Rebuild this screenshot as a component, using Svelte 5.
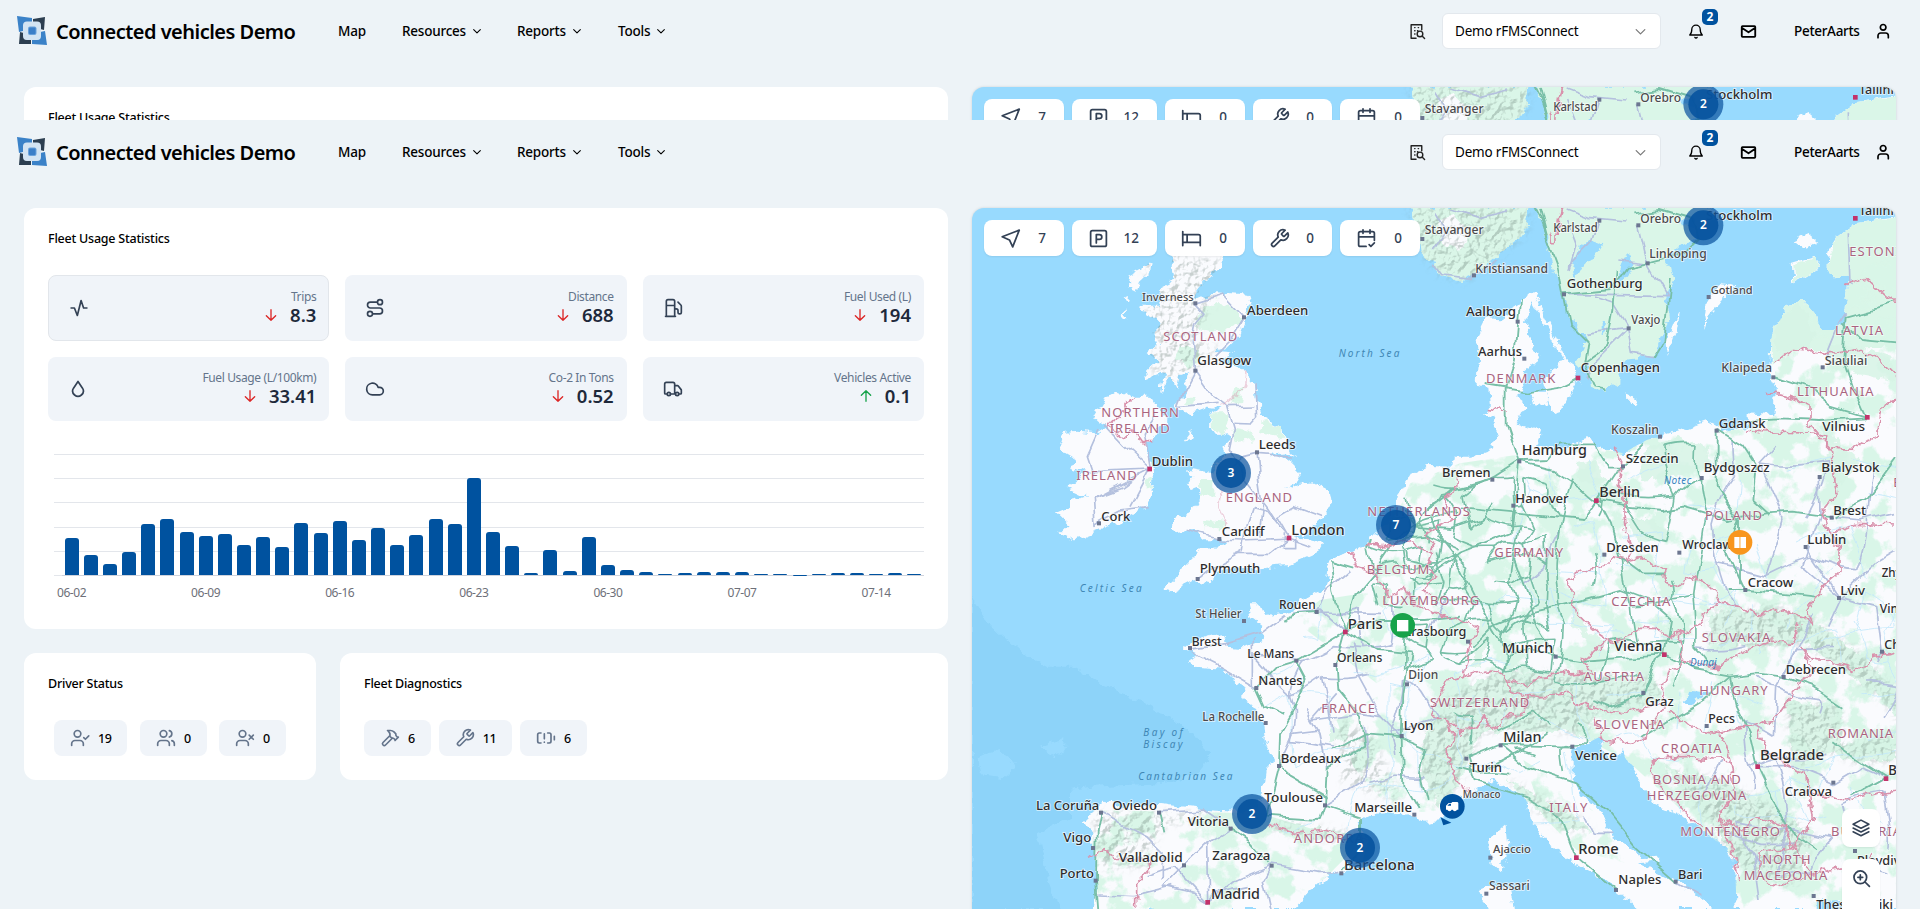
<script>
  const icons = {
    trips: 'M2.500 12h4l3.500 9 4.500-18 3 9h4',
    route: 'M3 19a3 3 0 1 0 6 0a3 3 0 1 0-6 0M15 5a3 3 0 1 0 6 0a3 3 0 1 0-6 0M9 19h8.500a3.500 3.500 0 0 0 0-7h-11a3.500 3.500 0 0 1 0-7H15',
    fuel: 'M3 22h12M4 9h10M14 22V4a2 2 0 0 0-2-2H6a2 2 0 0 0-2 2v18M14 13h2a2 2 0 0 1 2 2v2a2 2 0 0 0 4 0V9.800a2 2 0 0 0-.590-1.400L18 5',
    drop: 'M6.600 11 12 3 17.400 11c1.700 2.700 1 6.200-1.300 8.200a6.300 6.300 0 0 1-8.200 0C5.600 17.200 4.900 13.700 6.600 11',
    cloud: 'M17.500 19H9a7 7 0 1 1 6.710-9h1.790a4.500 4.500 0 1 1 0 9Z',
    truck: 'M14 18V6a2 2 0 0 0-2-2H4a2 2 0 0 0-2 2v11a1 1 0 0 0 1 1h2M15 18H9M19 18h2a1 1 0 0 0 1-1v-3.650a1 1 0 0 0-.22-.624l-3.480-4.350A1 1 0 0 0 17.520 8H14M15 18a2 2 0 1 0 4 0a2 2 0 1 0-4 0M5 18a2 2 0 1 0 4 0a2 2 0 1 0-4 0',
    down: 'M12 4v16M5 13l7 7 7-7',
    up: 'M12 20V4M5 11l7-7 7 7',
    driverOn: 'M5 7a4 4 0 1 0 8 0a4 4 0 1 0-8 0M2 21v-2a4 4 0 0 1 4-4h6a4 4 0 0 1 4 4v2M16.500 11.500l2 2 4-4',
    drivers: 'M5 7a4 4 0 1 0 8 0a4 4 0 1 0-8 0M2 21v-2a4 4 0 0 1 4-4h6a4 4 0 0 1 4 4v2M16 3.130a4 4 0 0 1 0 7.750M22 21v-2a4 4 0 0 0-3-3.850',
    driverOff: 'M5 7a4 4 0 1 0 8 0a4 4 0 1 0-8 0M2 21v-2a4 4 0 0 1 4-4h6a4 4 0 0 1 4 4v2M17 8.500l5 5M22 8.500l-5 5',
    hammer: 'M15 12l-8.373 8.373a1 1 0 1 1-3-3L12 9M18 15l4-4M21.500 11.500l-1.914-1.914A2 2 0 0 1 19 8.172V7l-2.260-2.260a6 6 0 0 0-4.202-1.756L9 2.960l.92.82A6.180 6.180 0 0 1 12 8.400V10l2 2h1.172a2 2 0 0 1 1.414.586L18.500 14.500',
    wrench: 'M14.700 6.300a1 1 0 0 0 0 1.400l1.600 1.600a1 1 0 0 0 1.400 0l3.770-3.770a6 6 0 0 1-7.940 7.940l-6.910 6.910a2.120 2.120 0 0 1-3-3l6.910-6.910a6 6 0 0 1 7.940-7.940l-3.760 3.760z',
    battery: 'M10 17h.01M10 7v6M14 6h2a2 2 0 0 1 2 2v8a2 2 0 0 1-2 2h-2M22 14v-4M6 18H4a2 2 0 0 1-2-2V8a2 2 0 0 1 2-2h2',
    nav: 'M22 2.500 14.500 21.500 10.800 13.700 2.500 10z',
    parking: 'M5 3h14a2 2 0 0 1 2 2v14a2 2 0 0 1-2 2H5a2 2 0 0 1-2-2V5a2 2 0 0 1 2-2zM9.500 17V7.500h3.500a2.800 2.800 0 0 1 0 5.600H9.500',
    bed: 'M2 4v16M2 7.500h18a2 2 0 0 1 2 2V20M2 16.500h20M7 7.500v9',
    calendar: 'M11.500 21H5a2 2 0 0 1-2-2V6a2 2 0 0 1 2-2h14a2 2 0 0 1 2 2v8M16 2v4M8 2v4M3 10h18M15 19l2 2 4-4',
    layers: 'M12 2.500 2.500 7.500l9.500 4.800 9.500-4.800zM2.500 12l9.500 4.800 9.500-4.800M2.500 16.500 12 21.300l9.500-4.800',
    zoomIn: 'M2.500 10.500a8 8 0 1 0 16 0a8 8 0 1 0-16 0M7.500 10.500h6M10.500 7.500v6M22 22l-5.900-5.900',
    chevron: 'M4 8.500l8 8 8-8',
    bell: 'M10.300 21.500a2 2 0 0 0 3.400 0M2.500 18h19c-2.300-1.500-3.200-3.500-3.200-8.500a6.300 6.300 0 0 0-12.600 0c0 5-.9 7-3.200 8.500z',
    mail: 'M3.500 4.500h17a1 1 0 0 1 1 1v13a1 1 0 0 1-1 1h-17a1 1 0 0 1-1-1v-13a1 1 0 0 1 1-1zM3 7l9 6 9-6',
    user: 'M8 6.500a4.200 4.200 0 1 0 8.400 0a4.200 4.200 0 1 0-8.400 0M4.500 22v-3a4 4 0 0 1 4-4H16a4 4 0 0 1 4 4v3',
    building: 'M10 21.500H3v-19h15v7M8 6.500h.5M13 6.500h.5M8 11h.5M8 15.500h.5M12 11h.5M11.500 15.500a4 4 0 1 0 8 0a4 4 0 1 0-8 0M18.500 18.500l3.500 3.500',
  };

  const stats = [
    ['Trips', '8.3', 'trips', 'down'],
    ['Distance', '688', 'route', 'down'],
    ['Fuel Used (L)', '194', 'fuel', 'down'],
    ['Fuel Usage (L/100km)', '33.41', 'drop', 'down'],
    ['Co-2 In Tons', '0.52', 'cloud', 'down'],
    ['Vehicles Active', '0.1', 'truck', 'up'],
  ];
  const bars = [37, 20, 11, 23, 51, 56.500, 43.500, 39.500, 41, 30.500, 38, 28.500, 52, 42.500, 54, 35, 47.500, 30.500, 40, 56, 51.500, 97, 43.500, 29.500, 2.500, 25.500, 4, 38, 10, 5, 3.500, 0.700, 2, 3.500, 3, 3, 1.300, 1.300, 0.300, 1.300, 2.500, 2.500, 1.300, 2, 1];
  const days = ['06-02', '06-09', '06-16', '06-23', '06-30', '07-07', '07-14'];
  const filters = [['nav', 7, 80], ['parking', 12, 85], ['bed', 0, 80], ['wrench', 0, 79], ['calendar', 0, 80]];

  // Coastlines, three map units to the pixel
  const continent = '1860,560 1725,280 1680,295 1670,320 1620,355 1580,350 1550,410 1555,450 1550,555 1585,560 1590,620 1568,640 1600,650 1615,700 1585,750 1530,770 1485,770 1480,800 1400,798 1355,820 1325,870 1310,930 1290,960 1250,1000 1220,1030 1170,1060 1120,1075 1105,1100 1100,1150 1080,1170 1010,1210 1000,1235 920,1245 905,1210 865,1210 875,1250 910,1280 905,1320 850,1345 805,1340 785,1300 700,1320 670,1345 710,1365 680,1380 705,1400 770,1405 830,1440 850,1470 850,1500 890,1520 910,1580 915,1620 945,1680 915,1710 905,1780 890,1825 830,1835 730,1830 600,1815 540,1820 430,1805 365,1870 400,1900 395,1940 410,1980 415,2042 400,2130 1000,2130 1050,2070 1060,2050 1140,2020 1205,1980 1220,1925 1190,1870 1230,1845 1360,1840 1400,1865 1440,1860 1500,1800 1560,1760 1600,1735 1640,1760 1695,1785 1710,1860 1760,1925 1840,1985 1870,2005 1920,2030 1980,2080 2030,2130 2270,2130 2220,2090 2150,2045 2070,2005 2040,1990 2100,1985 2090,1970 2050,1975 2020,1950 1955,1910 1940,1870 1910,1820 1860,1780 1835,1730 1835,1660 1840,1640 1860,1640 1920,1610 1935,1620 1925,1640 1955,1680 1980,1650 2020,1710 2080,1810 2170,1850 2240,1900 2300,1950 2325,1990 2330,2130 2570,2130 2570,2105 2640,2100 2650,2130 2850,2130 2850,50 2790,55 2685,70 2630,110 2605,150 2600,200 2630,235 2670,220 2665,280 2655,370 2620,390 2580,390 2570,350 2530,300 2480,320 2435,410 2430,530 2445,560 2440,645 2360,640 2360,670 2420,675 2340,685 2280,700 2280,680 2240,660 2160,690 2060,720 1990,760 1940,750 1925,740 1880,720 1830,735 1780,750 1730,740 1750,700 1670,670 1680,640 1710,620 1670,590 1690,560 1695,510 1730,485 1740,460 1725,450 1705,400 1695,370 1720,310';
  const nordic = ['1350,20 1360,80 1380,120 1385,160 1410,185 1440,225 1510,240 1545,225 1595,185 1625,155 1685,110 1700,90 1705,20', '1725,20 1760,90 1765,150 1795,240 1810,290 1830,350 1875,410 1870,450 1850,485 1865,500 1885,500 1890,560 1940,570 1970,555 1975,525 1990,480 2080,470 2100,420 2125,370 2120,300 2140,240 2130,200 2115,180 2170,130 2210,110 2220,90 2250,60 2250,20'];
  const islands = ['640,130 785,140 785,200 750,230 720,265 705,305 740,290 770,280 865,287 872,310 850,355 840,400 800,440 760,455 820,460 780,480 850,510 885,550 890,600 910,655 960,680 975,715 1005,775 980,760 930,765 1000,790 1020,830 1010,850 975,870 1020,855 1060,850 1110,875 1115,905 1090,950 1060,975 1040,1000 1000,1010 1060,1020 1095,1030 1075,1055 985,1095 920,1100 905,1115 875,1100 800,1105 770,1120 745,1150 700,1140 660,1160 630,1175 607,1170 640,1140 665,1105 720,1050 790,1040 805,1025 775,1015 730,1015 700,990 650,1000 640,985 655,955 700,925 720,900 715,860 690,870 675,860 700,830 680,805 760,820 770,780 800,760 790,740 810,720 805,700 770,705 750,680 755,640 785,625 740,620 690,640 655,625 660,600 680,565 675,540 690,510 660,520 650,570 630,530 600,580 610,520 560,540 555,515 590,480 565,460 600,430 575,400 605,370 560,345 540,320 605,320 600,265 645,240 635,195', '495,572 520,590 575,590 600,630 620,660 590,690 575,725 555,730 565,760 575,810 580,850 565,920 510,940 480,965 420,990 370,1010 330,1018 295,1000 320,975 285,940 330,920 330,900 385,890 320,860 350,835 385,820 330,800 345,775 320,760 300,735 310,700 350,695 410,700 440,680 415,665 400,650 430,600 465,590', '575,180 570,220 540,245 530,275 508,265 520,240 510,225 545,205', '510,285 508,305 485,295', '495,320 502,355 490,355', '698,685 695,710 670,722', '1770,510 1820,480 1850,500 1855,540 1830,580 1810,630 1780,640 1765,600 1750,560', '1705,575 1755,575 1765,610 1730,620', '2160,328 2150,390 2130,440 2120,468 2117,430 2140,370', '2290,250 2320,255 2285,310 2255,340 2240,380 2235,350 2240,300', '2000,582 2030,600 2025,615 2002,602', '2495,190 2560,170 2585,200 2530,235 2500,250', '2500,125 2540,105 2570,130 2540,155', '1590,1920 1640,1875 1645,1940 1625,2020 1595,1990', '1555,2070 1610,2050 1655,2070 1665,2130 1580,2130'];
  const lakes = ['1860,140 1890,115 1930,130 1900,180 1870,200 1850,240 1840,200', '1990,170 2015,160 2010,210 1985,250 1970,240', '2180,1475 2240,1480 2200,1510 2175,1515', '1925,370 1938,360 1935,395 1925,400', '2150,60 2200,55 2210,80 2170,75'];
  const moors = ['715,340 770,300 840,340 840,370 780,400 710,380', '660,440 710,450 720,490 680,500 650,480', '755,640 800,640 810,690 780,705 755,680', '820,680 870,690 880,720 830,730', '905,660 960,680 970,715 900,700', '720,840 760,840 760,890 720,890', '820,560 850,560 840,610 815,605', '560,830 578,840 575,870 560,860', '730,960 800,970 780,985 730,985', '670,590 710,590 700,620 670,615'];
  const woods = ['1350,850 1500,790 1700,760 2280,690 2450,560 2430,380 2850,120 2850,2130 2300,2130 2230,1890 2000,1680 1840,1600 1400,1560 1340,1300 1240,1120', '1130,1560 1230,1500 1340,1450 1480,1600 1480,1830 1300,1840 1180,1700', '380,1830 900,1840 1200,1930 1000,2130 420,2130', '1690,1680 1800,1750 1920,1850 2000,1990 1850,1950 1750,1850', '1080,1200 1400,1150 1400,1350 1250,1450 1000,1260'];
  const mountains = ['1400,1590 1470,1490 1600,1420 1850,1420 2090,1440 2110,1500 1900,1540 1880,1600 1650,1590 1560,1600 1500,1740 1440,1820 1380,1720', '2250,1240 2450,1220 2550,1260 2700,1360 2780,1450 2700,1420 2540,1330 2380,1340 2240,1330', '2110,1700 2280,1740 2440,1820 2560,1900 2500,2060 2340,2000 2260,1880', '2480,1500 2640,1520 2650,1640 2500,1700', '2600,1650 2808,1600 2808,1680 2700,1690', '930,1870 1190,1900 1180,1930 940,1890', '2550,1270 2850,1500 2850,1600 2750,1480 2650,1410 2560,1350', '1640,1730 1700,1770 1850,1850 1900,1900 1800,1880 1690,1800'];
  // Closed forests between the lowland patches
  const forests = ['2060,745 2160,710 2240,740 2250,800 2150,830 2040,840', '1700,1070 1790,1080 1820,1200 1740,1230 1700,1160', '1840,1180 1880,1290 1940,1330 1900,1350 1830,1260', '1560,1250 1590,1270 1560,1400 1530,1400', '2600,430 2700,440 2790,470 2808,540 2700,520 2600,500', '2450,360 2520,310 2570,400 2540,450 2450,450', '2250,1290 2340,1260 2440,1290 2360,1320 2280,1330', '1850,790 1910,780 1940,850 1860,850', '1750,880 1790,860 1800,920 1760,920', '2600,700 2700,780 2640,860 2600,800', '2000,960 2080,960 2140,1010 2040,1030', '1240,1160 1290,1170 1280,1230 1240,1200', '1110,1580 1170,1570 1160,1620 1110,1630'];

  const borders = [
    '520,590 495,610 495,640 460,660 440,680 470,700 490,718 520,690 545,725 580,725',
    '1805,24 1795,80 1790,125 1775,125 1770,100', '1585,625 1640,635', '1965,740 1985,790 1975,860 1995,880 1995,940 2000,1000 2015,1050 2000,1080',
    '1490,830 1485,880 1455,890 1450,930 1480,960 1430,980 1400,1000 1420,1040 1420,1060', '1220,1030 1290,1040 1340,1020 1390,1050 1420,1060',
    '1170,1060 1190,1100 1240,1115 1280,1180 1310,1180 1330,1160 1350,1200 1370,1215', '1420,1060 1400,1110 1430,1130 1400,1150 1390,1170 1410,1190',
    '1370,1215 1420,1235 1500,1260 1550,1280 1530,1340 1510,1430 1590,1410 1650,1440', '1510,1430 1460,1440 1440,1490 1410,1540 1460,1560 1500,1600 1550,1580 1570,1550 1600,1590 1630,1550 1690,1550 1700,1490 1650,1470 1650,1440',
    '1460,1560 1480,1610 1460,1670 1490,1740 1525,1765', '1650,1440 1700,1455 1740,1430 1850,1420 1900,1420 1870,1380 1910,1350 1940,1320',
    '1700,1490 1760,1490 1830,1480 1850,1510 1920,1530 2000,1540 2060,1520 2120,1510 2110,1470 2130,1410 2160,1400 2165,1300',
    '1825,1145 1860,1120 1940,1090 1960,1070 2000,1080 2040,1070 2120,1115 2110,1140 2150,1160 2190,1130 2240,1150 2270,1180 2280,1210 2240,1230 2220,1270 2160,1300 2140,1310 2080,1285 2030,1285 2010,1310 1960,1330 1900,1290 1850,1240 1840,1190 1825,1145',
    '2165,1380 2280,1400 2290,1380 2370,1350 2440,1320 2500,1330 2520,1270', '2280,1210 2350,1220 2400,1250 2440,1225 2530,1250 2560,1275',
    '2560,1275 2540,1230 2580,1170 2640,1120 2640,1050 2610,1000 2590,930 2630,880 2610,740 2570,700 2400,695 2360,690',
    '2425,580 2480,590 2550,620 2550,680 2600,710 2600,740 2680,745 2750,700 2760,620 2808,600', '2440,490 2500,445 2600,460 2700,445 2760,480 2808,530', '2660,260 2720,235 2780,290 2808,300', '2610,1000 2690,970 2808,975',
    '2130,1530 2200,1590 2260,1600 2340,1580 2440,1565 2500,1480 2560,1400 2520,1340', '2520,1340 2560,1380 2600,1385 2700,1410 2740,1370 2808,1360',
    '2380,1570 2420,1650 2480,1700 2540,1720 2560,1780 2650,1800 2750,1780 2808,1770', '1900,1550 1930,1620 2020,1630 2060,1600 2120,1510', '2280,1600 2300,1640 2310,1680 2180,1670 2120,1670 2075,1690 2090,1740 2140,1800 2220,1880',
    '2310,1680 2320,1780 2270,1860 2350,1880 2400,1850 2470,1880 2500,1940 2400,1950 2400,2020 2440,2060 2540,2030 2600,2010 2700,1990 2740,1960', '2540,1720 2560,1860 2500,1940 2560,2030', '2270,1860 2300,1900 2320,1960 2340,2040',
    '930,1875 1000,1900 1100,1890 1160,1920 1210,1920', '390,1975 430,1955 460,1975 540,1975 575,2000 530,2050 530,2120',
  ];

  const motorways = [
    '1678,984 1660,1070 1700,1180 1730,1280 1787,1370', '1678,784 1665,900 1655,1000 1500,1060 1400,1130', '1678,784 1780,810 1860,860 1909,902 2000,920 2110,930 2170,920 2310,960 2420,940 2500,935 2610,950', '1678,784 1590,840 1480,870 1400,930', '1678,784 1640,670 1640,560 1665,480 1675,365 1680,300', '1909,902 1870,960 1500,925', '1909,902 1950,980 1973,1063 2050,1120 2120,1120', '1909,902 1970,810 1990,800 2060,730', '1787,1370 1850,1380 2000,1370 2113,1364', '1787,1370 1700,1350 1640,1370 1620,1420', '2113,1364 2130,1260 2060,1200 1980,1170 1870,1200', '2113,1364 2200,1410 2310,1430 2390,1420 2470,1430', '2470,1430 2560,1460 2650,1520', '2310,1430 2330,1520 2370,1600 2393,1700', '2310,1430 2230,1500 2130,1560 2040,1620', '2393,1700 2440,1800 2500,1900 2570,1950', '2050,1480 2090,1380 2113,1364', '2300,1170 2356,1170 2480,1180 2560,1190', '2356,1170 2300,1050 2340,960', '2270,690 2270,860 2340,960 2340,1150', '2270,690 2350,740 2390,800 2380,900 2430,945', '1812,283 1950,270 2000,200 2075,185 2170,160 2220,110', '1812,283 1830,370 1880,420 1870,490 1900,560 1940,565', '1812,283 1795,200 1765,120 1740,24', '1870,490 1940,440 1960,330 1970,210', '1580,555 1700,575 1800,560 1854,534', '1156,1296 1120,1180 1110,1080 1180,1100', '1156,1296 1010,1382 1040,1440 990,1550 960,1600 957,1695', '1156,1296 1130,1390 1135,1470 1200,1550 1210,1640 1100,1700 1095,1815', '1156,1296 1250,1350 1350,1360 1330,1480 1325,1608', '1156,1296 1190,1180 1240,1120 1300,1030', '1156,1296 1260,1260 1400,1260 1500,1250', '1070,1236 1010,1240 970,1260', '889,1463 915,1520 970,1545', '889,1463 950,1400 1010,1382', '1325,1608 1330,1760 1370,1830', '1325,1608 1210,1600 1120,1650', '957,1695 980,1720 1100,1790', '957,1695 930,1800 920,1850 1080,1860 1095,1815 1200,1850 1200,1940 1150,2010', '1622,1635 1520,1676 1540,1740 1700,1790', '1622,1635 1837,1640', '1622,1635 1700,1700 1850,1750 1940,1830 2030,1940 2150,2045', '1700,1790 1800,1850 1849,1972 1968,2070', '1325,1608 1400,1640 1380,1720 1400,1800', '423,1838 410,1900 408,2040 415,2130', '597,1838 610,1900', '812,1885 880,1930 930,1990', '2441,530 2560,570 2620,620 2720,650', '2360,660 2460,655 2580,660 2721,652', '2720,650 2680,560 2650,470 2660,350 2808,310', '2808,780 2720,900 2615,952', '2650,370 2700,420 2808,430', '1420,940 1440,1010 1430,1080', '1330,930 1370,980 1470,990 1560,960', '1310,1020 1400,1010 1490,1050', '1760,1600 1700,1640 1590,1700', '2050,1480 1950,1520 1900,1500', '2620,1630 2690,1680 2777,1735 2680,1790', '1540,1340 1600,1280 1700,1240 1870,1200', '1650,1370 1560,1220 1500,1100 1430,1010',
    '1725,20 1745,60 1765,120', '2220,110 2200,60 2100,30 2020,40', '1678,784 1760,780 1800,730 1900,730 1940,800 1990,800', '2130,240 2120,330 2110,420 2080,470',
  ];
  const roads = [
    '706,512 760,590 800,620 820,690 808,750 850,830 920,920 960,980', '706,512 700,420 710,370 735,340 706,310', '852,352 810,420 760,470', '706,310 790,285 852,352', '800,620 880,618', '885,550 890,650 870,672 820,670', '891,757 900,850 910,920 900,1010', '891,757 840,770 808,800', '891,757 990,765', '706,512 670,580 655,620 770,610', '987,1014 920,930 880,920 860,980 850,1050 760,1100 713,1137', '987,1014 850,1020 778,1017 680,990', '987,1014 950,950 1000,920 1080,950', '987,1014 930,1060 820,1060', '987,1014 1060,1040', '970,1000 970,1040 1010,1040 1010,1000', '569,807 490,735 440,680', '569,807 400,815 385,770 420,690', '569,807 550,700 590,640', '569,807 430,880 400,890 405,970 480,930 560,920', '569,807 510,920', '405,890 485,860 540,820', '1410,185 1440,225 1540,235 1600,180', '1975,180 2063,190 2120,290 1812,283', '2006,385 1960,310 1900,290', '2006,385 2020,460 2080,470', '2006,385 1880,400', '2006,385 1900,490 1880,540', '2000,60 1890,50 1820,24', '1920,62 1900,130 1830,200', '1156,1296 1080,1230 1000,1240', '889,1463 780,1400 720,1370 690,1345', '690,1345 800,1330 900,1300 980,1240', '880,1320 880,1460', '1040,1530 1080,1600 1100,1700', '957,1695 1000,1600 1080,1590', '1130,1480 1060,1560 1200,1540 1270,1550', '1325,1608 1260,1540 1200,1430 1180,1330', '1095,1815 1200,1750 1220,1680 1210,1580', '423,1838 560,1910 610,1960 610,2040', '597,1838 730,1830 812,1885', '672,1995 740,1930 812,1885', '672,1995 610,2060 700,2080 743,2107', '743,2107 740,1930', '743,2107 830,2040 935,1995 1080,2020 1144,2018', '743,2107 640,2000 560,2030', '935,1995 910,2040 930,2130', '740,2107 760,2080 860,2060', '415,2085 520,2090 640,2060', '2665,100 2670,250', '2600,470 2640,370 2660,340', '2615,952 2700,960 2808,935', '2578,831 2580,950 2530,1100 2640,1193', '2640,1193 2750,1090 2800,1060', '2640,1193 2600,1280', '2640,1193 2750,1220 2766,1354 2750,1380', '2538,1043 2640,1193', '2471,1430 2560,1250', '2393,1700 2500,1700 2620,1748', '2620,1748 2700,1700 2777,1735', '2380,1960 2400,2100', '2300,1900 2400,1930 2500,1930', '1875,1850 1900,1900 1960,1900', '2148,2044 2230,2090', '1170,1110 1100,1170 1070,1236 1260,1240', '1800,1000 1750,1100 1690,1150',
    '1480,24 1560,50 1650,30', '1430,40 1460,90 1420,150', '1820,60 1850,140 1830,210', '2035,76 2063,190',
  ];

  // Secondary network: a jittered lattice kept inside the coastline
  const ring = continent.split(' ').map((p) => p.split(',').map(Number));
  function inside(x, y) {
    let hit = false;
    for (let i = 0, j = ring.length - 1; i < ring.length; j = i++) {
      const [xi, yi] = ring[i];
      const [xj, yj] = ring[j];
      if (yi > y !== yj > y && x < ((xj - xi) * (y - yi)) / (yj - yi) + xi) hit = !hit;
    }
    return hit;
  }
  let seed = 41;
  const rnd = () => (seed = (seed * 16807) % 2147483647) / 2147483647;
  function lattice(x0, y0, x1, y1, step, keep) {
    const grid = [];
    for (let y = y0; y <= y1; y += step) {
      const row = [];
      for (let x = x0; x <= x1; x += step) row.push([Math.round(x + (rnd() - 0.5) * step * 0.8), Math.round(y + (rnd() - 0.5) * step * 0.8)]);
      grid.push(row);
    }
    let d = '';
    const link = (a, b) => {
      if (!b || rnd() > keep) return;
      const mx = (a[0] + b[0]) / 2 + (rnd() - 0.5) * step * 0.3;
      const my = (a[1] + b[1]) / 2 + (rnd() - 0.5) * step * 0.3;
      if (inside(...a) && inside(...b) && inside(mx, my)) d += `M${a}Q${mx} ${my} ${b}`;
    };
    grid.forEach((row, r) => row.forEach((p, c) => {
      link(p, row[c + 1]);
      link(p, grid[r + 1]?.[c]);
    }));
    return d;
  }
  const green = lattice(1340, 840, 1800, 1420, 62, 0.72) + lattice(1240, 960, 1440, 1200, 48, 0.6) + lattice(1800, 760, 2300, 1500, 110, 0.55) + lattice(1480, 1560, 1900, 1740, 80, 0.4);
  const pale = lattice(900, 1240, 1500, 1860, 105, 0.45) + lattice(2300, 700, 2808, 1300, 130, 0.35) + lattice(2250, 1350, 2808, 2100, 110, 0.4);
  const streams = lattice(900, 1200, 2808, 1900, 95, 0.35) + lattice(1700, 800, 2808, 1300, 100, 0.35);

  // text, x, baseline, width, size
  const towns = [
    ['Inverness', 546, 303, 155, 33, 's'], ['Aberdeen', 861, 345, 184, 40], ['Glasgow', 712, 495, 162, 40], ['Leeds', 896, 748, 111, 40], ['Dublin', 575, 799, 124, 40], ['Cork', 424, 962, 87, 40], ['Cardiff', 785, 1008, 129, 38], ['London', 994, 1004, 160, 43], ['Plymouth', 719, 1120, 182, 40],
    ['Stavanger', 1394, 102, 177, 35, 's'], ['Kristiansand', 1546, 218, 218, 35, 's'], ['Karlstad', 1780, 97, 133, 35, 's'], ['Orebro', 2041, 69, 122, 35, 's'], ['Stockholm', 2238, 60, 199, 38], ['Linkoping', 2068, 174, 172, 35, 's'], ['Gothenburg', 1820, 265, 228, 40], ['Vaxjo', 2014, 371, 87, 35, 's'], ['Gotland', 2252, 283, 126, 33, 's'], ['Tallinn', 2697, 46, 118, 38], ['Aalborg', 1518, 348, 150, 40], ['Aarhus', 1554, 467, 132, 40], ['Copenhagen', 1862, 517, 238, 40], ['Klaipeda', 2284, 515, 152, 36, 's'], ['Siauliai', 2594, 494, 128, 35, 's'], ['Vilnius', 2587, 692, 128, 40], ['Koszalin', 1953, 703, 144, 36, 's'], ['Gdansk', 2276, 683, 141, 40], ['Hamburg', 1685, 765, 196, 43], ['Szczecin', 1997, 790, 159, 40], ['Bydgoszcz', 2231, 817, 198, 40], ['Bialystok', 2584, 815, 175, 40], ['Bremen', 1446, 830, 146, 40], ['Hanover', 1666, 909, 160, 40], ['Berlin', 1918, 892, 122, 43], ['Brest', 2620, 944, 98, 40], ['Dresden', 1939, 1055, 157, 40], ['Wroclaw', 2167, 1048, 150, 40], ['Lublin', 2542, 1033, 117, 40],
    ['Rouen', 957, 1227, 110, 37], ['St Helier', 706, 1255, 139, 35, 's'], ['Brest', 695, 1337, 90, 36], ['Paris', 1163, 1287, 105, 43], ['Strasbourg', 1318, 1308, 201, 40], ['Le Mans', 862, 1375, 141, 36], ['Orleans', 1131, 1386, 136, 36], ['Nantes', 895, 1455, 133, 40], ['Dijon', 1345, 1436, 90, 36, 's'], ['La Rochelle', 727, 1562, 186, 35, 's'], ['Lyon', 1331, 1591, 89, 40], ['Bordeaux', 962, 1689, 181, 40], ['Toulouse', 913, 1806, 176, 40], ['Marseille', 1183, 1835, 173, 40], ['La Coruña', 228, 1829, 190, 40], ['Oviedo', 457, 1829, 134, 40], ['Vitoria', 683, 1878, 124, 40], ['Vigo', 310, 1927, 84, 40], ['Valladolid', 476, 1987, 192, 40], ['Zaragoza', 757, 1979, 174, 40], ['Porto', 299, 2033, 103, 40], ['Madrid', 753, 2098, 147, 43], ['Barcelona', 1152, 2010, 212, 43],
    ['Cracow', 2363, 1162, 137, 40], ['Lviv', 2641, 1184, 74, 40], ['Zhytomyr', 2765, 1132, 160, 40], ['Vinnytsia', 2759, 1240, 160, 40], ['Chernivtsi', 2773, 1346, 180, 40], ['Munich', 1627, 1360, 153, 43], ['Vienna', 1962, 1354, 145, 43], ['Debrecen', 2477, 1423, 181, 40], ['Graz', 2056, 1517, 85, 40], ['Pecs', 2245, 1570, 80, 36], ['Milan', 1630, 1626, 115, 43], ['Turin', 1529, 1716, 97, 40], ['Venice', 1845, 1680, 126, 40], ['Monaco', 1508, 1794, 114, 30, 's'], ['Belgrade', 2400, 1680, 192, 43], ['Craiova', 2474, 1788, 142, 40], ['Bucharest', 2785, 1726, 190, 43], ['Rome', 1855, 1962, 121, 43], ['Ajaccio', 1599, 1958, 114, 34, 's'], ['Sassari', 1587, 2070, 122, 35, 's'], ['Naples', 1975, 2053, 129, 40], ['Bari', 2154, 2036, 73, 40], ['Plovdiv', 2691, 1994, 130, 40], ['Thessaloniki', 2569, 2128, 230, 40],
  ];
  const countries = [
    ['SCOTLAND', 610, 424, 222], ['NORTHERN', 424, 651, 233], ['IRELAND', 449, 700, 180], ['IRELAND', 349, 841, 181], ['ENGLAND', 797, 907, 199], ['NETHERLANDS', 1222, 947, 308], ['DENMARK', 1578, 549, 208], ['ESTONIA', 2668, 169, 180], ['LATVIA', 2625, 404, 144], ['LITHUANIA', 2511, 589, 230], ['POLAND', 2235, 960, 171], ['BELARUS', 2800, 860, 180], ['BELGIUM', 1220, 1122, 188], ['LUXEMBOURG', 1267, 1215, 291], ['GERMANY', 1603, 1071, 206], ['CZECHIA', 1954, 1218, 177], ['SLOVAKIA', 2225, 1326, 206], ['AUSTRIA', 1871, 1442, 181], ['HUNGARY', 2218, 1484, 205], ['FRANCE', 1084, 1539, 161], ['SWITZERLAND', 1410, 1521, 298], ['SLOVENIA', 1905, 1587, 208], ['CROATIA', 2103, 1658, 182], ['ROMANIA', 2603, 1615, 196], ['BOSNIA AND', 2078, 1752, 264], ['HERZEGOVINA', 2060, 1801, 299], ['ITALY', 1768, 1837, 114], ['MONTENEGRO', 2161, 1907, 299], ['ANDORRA', 1001, 1928, 208], ['BULGARIA', 2613, 1909, 210], ['NORTH', 2407, 1991, 145], ['MACEDONIA', 2351, 2040, 251],
  ];
  const seas = [['North Sea', 1136, 470, 182], ['Celtic Sea', 359, 1177, 186], ['Bay of', 550, 1608, 118], ['Biscay', 550, 1643, 117], ['Cantabrian Sea', 535, 1741, 282]];
  const capitals = [[569, 807], [987, 1014], [1854, 534], [2686, 55], [2722, 652], [1909, 902], [1156, 1296], [2113, 1364], [2393, 1700], [2778, 1736], [1849, 1973], [743, 2107]];
  const dots = [[706, 310], [852, 352], [706, 512], [891, 757], [417, 970], [778, 1017], [713, 1137], [1387, 117], [1542, 226], [1918, 62], [2035, 76], [2063, 190], [1812, 283], [2246, 291], [2006, 385], [1673, 365], [1693, 476], [2440, 532], [2588, 502], [2100, 710], [2270, 692], [1678, 784], [1989, 799], [2225, 834], [2579, 831], [1597, 839], [1660, 917], [2615, 953], [1933, 1064], [2158, 1058], [2537, 1041], [1070, 1236], [852, 1263], [690, 1344], [1009, 1382], [1126, 1395], [889, 1464], [1341, 1453], [917, 1569], [1325, 1608], [957, 1698], [1095, 1816], [1363, 1844], [423, 1838], [597, 1838], [812, 1886], [399, 1944], [672, 1996], [935, 1997], [407, 2042], [1144, 2020], [2356, 1170], [2637, 1194], [1524, 1325], [1787, 1370], [2471, 1431], [2050, 1479], [2240, 1578], [1622, 1636], [1519, 1676], [1837, 1640], [2620, 1748], [1591, 1973], [1579, 2081], [1968, 2070], [2147, 2045], [2685, 1953], [2561, 2088], [2766, 1355]];
  const clusters = [[813, 819, 3], [1308, 975, 7], [2230, 76, 2], [876, 1842, 2], [1200, 1943, 2]];
</script>

{#snippet icon(name, size = 18, width = 2)}
  <svg class="icon" viewBox="0 0 24 24" width={size} height={size} stroke-width={width}><path d={icons[name]} /></svg>
{/snippet}

{#snippet map(uid)}
  <svg class="map" viewBox="36 24 2772 2106" width="924" height="702">
    <defs>
      <filter id="coast{uid}" filterUnits="userSpaceOnUse" x="0" y="0" width="2860" height="2150">
        <feTurbulence type="fractalNoise" baseFrequency="0.03" numOctaves="4" seed="4" result="n" />
        <feDisplacementMap in="SourceGraphic" in2="n" scale="34" xChannelSelector="R" yChannelSelector="G" />
      </filter>
      <filter id="bend{uid}" filterUnits="userSpaceOnUse" x="0" y="0" width="2860" height="2150">
        <feTurbulence type="fractalNoise" baseFrequency="0.012" numOctaves="2" seed="8" result="n" />
        <feDisplacementMap in="SourceGraphic" in2="n" scale="36" xChannelSelector="R" yChannelSelector="G" />
      </filter>
      <filter id="woods{uid}" filterUnits="userSpaceOnUse" x="0" y="0" width="2860" height="2150" color-interpolation-filters="sRGB">
        <feTurbulence type="fractalNoise" baseFrequency="0.012" numOctaves="5" seed="12" />
        <feColorMatrix values="0 0 0 0 0.85  0 0 0 0 0.965  0 0 0 0 0.91  10 0 0 0 -4.8" result="m" />
        <feComposite in="m" in2="SourceAlpha" operator="in" />
      </filter>
      <filter id="relief{uid}" filterUnits="userSpaceOnUse" x="0" y="0" width="2860" height="2150" color-interpolation-filters="sRGB">
        <feTurbulence type="fractalNoise" baseFrequency="0.045" numOctaves="4" seed="3" />
        <feDiffuseLighting surfaceScale="16" diffuseConstant="1.1" lighting-color="#fff" result="lit">
          <feDistantLight azimuth="225" elevation="55" />
        </feDiffuseLighting>
        <feColorMatrix in="lit" values="0 0 0 0 0.42  0 0 0 0 0.5  0 0 0 0 0.47  -1.6 0 0 0 1.35" result="m" />
        <feGaussianBlur in="SourceAlpha" stdDeviation="14" result="soft" />
        <feComposite in="m" in2="soft" operator="in" />
      </filter>
      <clipPath id="shore{uid}">
        <polygon points={continent} />
        {#each islands as p}<polygon points={p} />{/each}
      </clipPath>
    </defs>
    <g filter="url(#coast{uid})">
      <polygon class="deep" points="36,1190 80,1260 200,1370 260,1400 340,1400 420,1450 500,1480 600,1540 700,1600 745,1660 720,1720 600,1750 400,1760 330,1770 330,1850 230,1900 250,2000 300,2130 36,2130" />
      <polygon class="shoal" points="50,1670 120,1650 170,1690 150,1730 60,1720" />
      <polygon class="shoal" points="240,1640 300,1620 325,1650 280,1670" />
      <polygon class="land" points={continent} />
      {#each islands as p}<polygon class="land" points={p} />{/each}
      {#each nordic as p}<polygon class="wood" points={p} />{/each}
      <polygon class="wood" points="2435,410 2480,320 2530,300 2570,350 2580,390 2620,390 2655,370 2665,280 2670,220 2630,235 2600,200 2630,110 2685,70 2850,50 2850,440 2600,450 2500,445 2435,500" />
      <polygon class="land" points="1430,70 1480,50 1530,100 1500,150 1450,130" />
      <polygon class="wood" points="2500,195 2560,172 2583,200 2530,233 2503,247" />
      {#each moors as p}<polygon class="wood" points={p} />{/each}
    </g>
    <g clip-path="url(#shore{uid})">
      <g filter="url(#woods{uid})">{#each woods as p}<polygon points={p} />{/each}</g>
      <g class="alps" filter="url(#coast{uid})">
        {#each mountains as p}<polygon points={p} />{/each}
        {#each forests as p}<polygon points={p} />{/each}
      </g>
      <g class="relief" filter="url(#relief{uid})">
        {#each mountains as p}<polygon points={p} />{/each}
        <polygon points="560,170 780,170 760,300 700,420 780,440 640,560 570,500" />
        <polygon points="1130,1560 1230,1600 1320,1800 1150,1750" />
        <polygon points="400,1840 800,1840 600,1880 560,2000 420,2000" />
      </g>
    </g>
    <g class="relief" filter="url(#relief{uid})"><polygon points={nordic[0]} /></g>
    <g filter="url(#coast{uid})">{#each lakes as p}<polygon class="sea" points={p} />{/each}</g>
    <g filter="url(#bend{uid})" class="lines">
      <path class="stream" d={streams} />
      <path class="road" d={pale} />
      {#each roads as p}<polyline class="road" points={p} />{/each}
      <path class="motorway thin" d={green} />
      {#each motorways as p}<polyline class="motorway" points={p} />{/each}
    </g>
    <g filter="url(#coast{uid})" class="lines">
      {#each borders as p}<polyline class="border" points={p} />{/each}
      <polyline class="border faint" points="855,515 850,560 830,590 780,615" />
      <polyline class="border faint" points="790,880 780,930 800,975" />
    </g>
    {#each dots as [x, y]}<rect class="dot" x={x - 6} y={y - 6} width="12" height="12" />{/each}
    {#each capitals as [x, y]}<rect class="capital" x={x - 7} y={y - 7} width="14" height="14" />{/each}
    {#each countries as [t, x, y, w]}<text class="country" {x} {y} textLength={w} font-size="39">{t}</text>{/each}
    {#each seas as [t, x, y, w]}<text class="sea-name" {x} {y} textLength={w} font-size="30">{t}</text>{/each}
    <text class="river" x="2112" y="852" textLength="82" font-size="30">Notec</text>
    <text class="river" x="2190" y="1397" textLength="80" font-size="30">Dunaj</text>
    {#each towns as [t, x, y, w, s, k]}<text class="town {k ?? ''}" {x} {y} textLength={w} lengthAdjust="spacingAndGlyphs" font-size={s}>{t}</text>{/each}
    {#each clusters as [x, y, n]}
      <circle class="halo" cx={x} cy={y} r="60" />
      <circle class="core" cx={x} cy={y} r="45" />
      <text class="count" {x} y={y + 12}>{n}</text>
    {/each}
    <circle fill="#17a34a" cx="1328" cy="1276" r="37" />
    <rect fill="#fff" x="1311" y="1260" width="34" height="34" />
    <circle fill="#f8961d" cx="2340" cy="1027" r="37" />
    <path fill="#fff" d="M2323 1011h15v33h-15zM2343 1011h15v33h-15z" />
    <path fill="#fcd9a8" d="M2338 1011h5v33h-5z" />
    <circle fill="#00529f" cx="1477" cy="1819" r="37" />
    <path fill="#00529f" d="M1442 1852l32 16-24 8z" />
    <path fill="#fff" fill-rule="evenodd" d="M1477 1806h14q4 0 4 4v19h-4a7 7 0 0 1-13 0h-3a7 7 0 0 1-13 0h-4v-12l8-8h8zm-4 5h-5l-6 6h11z" />
  </svg>
{/snippet}

{#snippet dashboard(uid)}
  <div class="page">
    <header>
      <svg class="logo" viewBox="0 0 30 30" width="30" height="30">
        <path fill="#3b82c8" d="M0 0l15 2v5L6 9v6l-4 1z" />
        <path fill="#2c3e50" d="M16 3l12-2-1 13-4-1V7l-7-1z" />
        <path fill="#2c3e50" d="M3 16l4 1v6l7 1v4L2 28z" />
        <path fill="#3b82c8" d="M28 15l2 14-15-1v-4l8-1v-7z" />
        <rect fill="#d3e4f3" x="6" y="5.500" width="18" height="18.500" rx="4" />
        <rect fill="#6ba3dc" x="11" y="10.500" width="8.500" height="8.500" rx="2" />
        <rect fill="#3b7fc8" x="12" y="11.500" width="6.500" height="6.500" rx="1" />
      </svg>
      <h1>Connected vehicles Demo</h1>
      <nav>
        <span class="map-link">Map</span>
        <span class="res">Resources {@render icon('chevron', 10, 2.600)}</span>
        <span class="rep">Reports {@render icon('chevron', 10, 2.600)}</span>
        <span class="tools">Tools {@render icon('chevron', 10, 2.600)}</span>
      </nav>
      <div class="tools-right">
        <span class="find">{@render icon('building', 17, 2)}</span>
        <div class="select"><span>Demo rFMSConnect</span>{@render icon('chevron', 13, 2.200)}</div>
        <span class="bell">{@render icon('bell', 16, 2)}<b>2</b></span>
        <span class="mail">{@render icon('mail', 17, 2.600)}</span>
        <span class="name">PeterAarts</span>
        {@render icon('user', 16, 2.500)}
      </div>
    </header>
    <main>
      <div class="left">
        <section class="card usage">
          <h2>Fleet Usage Statistics</h2>
          <div class="stats">
            {#each stats as [label, value, name, dir], i}
              <div class="stat" class:selected={i === 0}>
                {@render icon(name, 20, 2)}
                <div class="figure">
                  <span>{label}</span>
                  <div class="value {dir}">{@render icon(dir, 16, 2)}<strong>{value}</strong></div>
                </div>
              </div>
            {/each}
          </div>
          <div class="chart">
            <div class="bars">
              {#each bars as h}<div class="slot"><i style="height: {h}px"></i></div>{/each}
            </div>
          </div>
          <div class="days">{#each days as d}<span>{d}</span>{/each}</div>
        </section>
        <div class="row">
          <section class="card drivers">
            <h2>Driver Status</h2>
            <div class="chips">
              <span class="chip">{@render icon('driverOn', 20, 2)}19</span>
              <span class="chip">{@render icon('drivers', 20, 2)}0</span>
              <span class="chip">{@render icon('driverOff', 20, 2)}0</span>
            </div>
          </section>
          <section class="card diagnostics">
            <h2>Fleet Diagnostics</h2>
            <div class="chips">
              <span class="chip">{@render icon('hammer', 20, 2)}6</span>
              <span class="chip">{@render icon('wrench', 20, 2)}11</span>
              <span class="chip">{@render icon('battery', 20, 2)}6</span>
            </div>
          </section>
        </div>
      </div>
      <section class="map-card">
        {@render map(uid)}
        <div class="filters">
          {#each filters as [name, n, w]}<button style="width: {w}px">{@render icon(name, 21, 2)}<span>{n}</span></button>{/each}
        </div>
        <div class="controls">
          <button>{@render icon('layers', 20, 1.900)}</button>
          <button class="zoom">{@render icon('zoomIn', 19, 2.200)}</button>
        </div>
      </section>
    </main>
  </div>
{/snippet}

<div class="slice top">{@render dashboard('a')}</div>
<div class="slice bottom">{@render dashboard('b')}</div>

<style>
  :global(body) { background: #edf3f7; overflow: hidden; }
  .slice { overflow: hidden; font-family: 'Noto Sans', 'Open Sans', sans-serif; color: #000; background: #edf3f7; }
  .top { height: 120px; }
  .bottom { height: 789px; padding-top: 1px; box-sizing: border-box; }
  .page { width: 1920px; height: 788px; overflow: hidden; }
  .icon { fill: none; stroke: currentColor; stroke-linecap: round; stroke-linejoin: round; flex: none; display: block; }

  header { display: flex; align-items: center; height: 62px; padding: 0 29px 0 17px; box-sizing: border-box; }
  h1 { margin: 0 0 0 9px; width: 282px; font-size: 20px; font-weight: 650; letter-spacing: -0.520px; white-space: nowrap; }
  nav { display: flex; font-size: 13.500px; font-weight: 530; letter-spacing: -0.220px; }
  nav span { display: flex; align-items: center; gap: 6px; white-space: nowrap; box-sizing: border-box; }
  .map-link { width: 64px; }
  .res { width: 115px; }
  .rep { width: 101px; }
  .tools-right { display: flex; align-items: center; margin-left: auto; }
  .find { margin-right: 16px; color: #222; }
  .select { display: flex; align-items: center; justify-content: space-between; box-sizing: border-box; width: 219px; height: 36px; padding: 0 13px 0 12px; border: 1px solid #e3e8ed; border-radius: 6px; background: #fff; font-size: 13.500px; letter-spacing: -0.180px; }
  .select .icon { color: #777; }
  .bell { position: relative; margin-left: 27px; }
  .bell b { position: absolute; left: 14px; top: -14px; width: 16px; height: 16px; border-radius: 5px; background: #00529f; color: #fff; font-size: 12px; line-height: 16px; text-align: center; }
  .mail { margin: 0 37px 0 36px; }
  .name { font-size: 13.500px; font-weight: 530; letter-spacing: -0.300px; width: 81px; }

  main { display: flex; gap: 24px; padding: 25px 24px 0; }
  .left { width: 924px; }
  .card { background: #fff; border-radius: 12px; padding: 24px; box-sizing: border-box; }
  h2 { margin: 0; font-size: 12.500px; line-height: 14px; font-weight: 530; letter-spacing: -0.220px; white-space: nowrap; }
  .usage { height: 421px; }
  .stats { display: grid; grid-template-columns: repeat(3, 1fr); grid-template-rows: 66px 64px; gap: 16px; margin-top: 29px; }
  .stat { display: flex; align-items: center; justify-content: space-between; box-sizing: border-box; padding: 0 13px 0 20px; border-radius: 8px; background: #f0f4f9; color: #334155; }
  .selected { border: 1px solid #e2e6eb; padding: 0 12px 0 20px; }
  .figure { text-align: right; padding-bottom: 2px; }
  .figure span { display: block; font-size: 12px; line-height: 16px; letter-spacing: -0.370px; color: #64748b; }
  .value { display: flex; align-items: center; justify-content: flex-end; gap: 11px; line-height: 20px; }
  .value strong { font-size: 18.500px; font-weight: 650; letter-spacing: 0; color: #1e293b; }
  .down .icon { color: #dc2626; }
  .up .icon { color: #16a34a; }
  .chart { height: 122px; margin: 33px 0 0 6px; padding-left: 8px; display: flex; align-items: flex-end; background: repeating-linear-gradient(#e3e6eb 0 1px, transparent 1px 24.200px); }
  .bars { display: flex; align-items: flex-end; width: 100%; height: 121px; border-bottom: 1px solid #cfd3dc; }
  .slot { flex: 1; display: flex; justify-content: center; }
  .slot i { width: 14px; border-radius: 3px 3px 0 0; background: #00529f; }
  .days { display: flex; margin: 9px 0 0 -43.500px; font-size: 12px; line-height: 16px; letter-spacing: -0.450px; color: #6e7079; }
  .days span { width: 134.100px; flex: none; text-align: center; }
  .row { display: flex; gap: 24px; margin-top: 24px; }
  .row .card { height: 127px; }
  .drivers { width: 292px; }
  .diagnostics { flex: 1; }
  .chips { display: flex; margin-top: 29px; }
  .drivers .chips { gap: 12.500px; padding-left: 6px; }
  .diagnostics .chips { gap: 8px; }
  .chip { display: flex; align-items: center; gap: 8px; height: 36px; padding: 0 16px; border-radius: 8px; background: #f0f4f9; font-size: 12.500px; font-weight: 530; letter-spacing: -0.450px; }
  .chip .icon { color: #64748b; }

  .map-card { position: relative; width: 924px; height: 702px; overflow: hidden; border-radius: 12px 12px 0 0; background: #98dafe; box-shadow: 0 0 3px #0002; }
  .map { display: block; font-family: 'Noto Sans', 'Open Sans', sans-serif; }
  .filters { position: absolute; left: 12px; top: 12px; display: flex; gap: 8px; }
  button { display: flex; align-items: center; border: 0; border-radius: 8px; background: #fff; color: #334155; font: 500 13.500px 'Noto Sans', sans-serif; box-shadow: 0 1px 2px #0001; }
  .filters button { justify-content: space-between; height: 36px; padding: 0 18px 0 16px; }
  .controls { position: absolute; left: 870px; top: 601px; display: flex; flex-direction: column; gap: 12px; }
  .controls button { width: 38px; height: 38px; padding: 0; justify-content: center; }
  .controls .zoom { height: 76px; align-items: flex-start; padding-top: 10px; }

  .sea { fill: #98dafe; }
  .deep { fill: #8dd3f9; }
  .shoal { fill: #98dafe; }
  .land { fill: #fafbfe; }
  .wood { fill: #daf6e8; }
  .alps { fill: #d6f4e5; opacity: 0.85; }
  .relief { opacity: 0.35; }
  .lines { fill: none; stroke-linejoin: round; }
  .stream { stroke: #c3e8fb; stroke-width: 2.500; fill: none; }
  .road { stroke: #b4c0de; stroke-width: 5; fill: none; }
  .motorway { stroke: #78bfa7; stroke-width: 5.500; fill: none; }
  .thin { stroke-width: 5; }
  .border { stroke: #d992ac; stroke-width: 5; fill: none; }
  .faint { opacity: 0.4; }
  .dot { fill: #6c7690; }
  .capital { fill: #c2326b; }
  text { paint-order: stroke; }
  .town { fill: #2d2d2f; font-weight: 500; stroke: #fffb; stroke-width: 5; }
  .s { fill: #4a4a4d; }
  .country { fill: #a9647f; stroke: #fff9; stroke-width: 4; }
  .sea-name { fill: #3f87b5; font-style: italic; }
  .river { fill: #3583c0; font-style: italic; }
  .halo { fill: #0d559f; opacity: 0.72; }
  .core { fill: #07539f; opacity: 0.9; }
  .count { fill: #fff; font-size: 36px; font-weight: 600; text-anchor: middle; }
</style>
